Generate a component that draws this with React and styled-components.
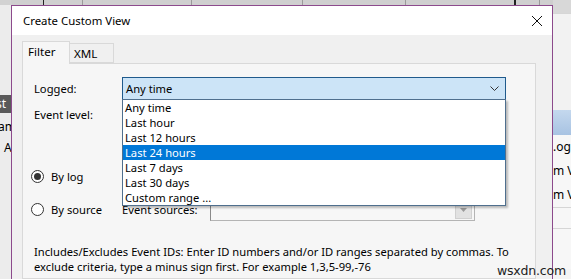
import styled, { createGlobalStyle } from 'styled-components';

const GlobalStyle = createGlobalStyle`
body{
  margin:0;
  overflow:hidden;
  font-family:"Noto Sans","Open Sans",sans-serif;
  font-size:11.2px;
  color:#000;
}
`;

const Desktop = styled.div`
position:relative;
display:flex;
flex-direction:row;
height:279px;
overflow:hidden;
background-color:#e9e9e9;
`;

const LeftStrip = styled.div`
width:11px;
flex-shrink:0;
display:flex;
flex-direction:column;
background-color:#ececec;
border-top:5px solid #d2d2d2;
`;

const DarkBar = styled.div`
margin-top:90px;
height:18px;
background-color:#5a5a5a;
color:#fff;
line-height:18px;
font-size:12px;
text-indent:-4px;
overflow:hidden;
white-space:nowrap;
`;

const StripText = styled.div`
margin-top:${p => p.top}px;
padding-left:${p => p.left || 0}px;
height:16px;
line-height:16px;
font-size:12px;
overflow:hidden;
white-space:nowrap;
text-indent:${p => p.indent || 0}px;
`;

const Middle = styled.div`
width:542px;
flex-shrink:0;
display:flex;
flex-direction:column;
`;

const TopBand = styled.div`
height:5px;
background-color:#cfcfcf;
display:flex;
flex-direction:row;
`;

const Tick = styled.div`
margin-left:${p => p.left}px;
width:${p => p.w || 1}px;
background-color:${p => p.dark ? '#222' : '#9a9a9a'};
`;

const Window = styled.div`
flex:1;
display:flex;
flex-direction:column;
border:1px solid #8c4a8c;
border-bottom:none;
background-color:#f0f0f0;
`;

const TitleBar = styled.div`
height:29px;
display:flex;
flex-direction:row;
align-items:center;
justify-content:space-between;
background-color:#fff;
padding-left:11px;
font-size:11.4px;
`;

const CloseButton = styled.div`
width:30px;
height:29px;
display:flex;
align-items:center;
justify-content:center;
`;

const Body = styled.div`
flex:1;
padding:6px 16px 0 10px;
display:flex;
flex-direction:column;
`;

const TabRow = styled.div`
display:flex;
flex-direction:row;
align-items:flex-end;
height:22px;
`;

const Tab = styled.div`
position:relative;
box-sizing:border-box;
width:${p => p.w}px;
height:${p => p.active ? 23 : 20}px;
padding-left:${p => p.active ? 5 : 4}px;
line-height:19px;
border:1px solid #d9d9d9;
border-bottom:${p => p.active ? 'none' : '1px solid #d9d9d9'};
border-left:${p => p.active ? '1px solid #d9d9d9' : 'none'};
background-color:${p => p.active ? '#f6f6f6' : '#f0f0f0'};
margin-bottom:${p => p.active ? -1 : 0}px;
z-index:${p => p.active ? 1 : 0};
font-size:11.6px;
`;

const Panel = styled.div`
flex:1;
border:1px solid #d9d9d9;
background-color:#f6f6f6;
padding:13px 11px 0 11px;
display:flex;
flex-direction:column;
`;

const Row = styled.div`
display:flex;
flex-direction:row;
align-items:center;
height:${p => p.h || 16}px;
margin-top:${p => p.mt || 0}px;
`;

const Label = styled.div`
width:${p => p.w || 88}px;
flex-shrink:0;
white-space:nowrap;
`;

const Combo = styled.div`
position:relative;
box-sizing:border-box;
width:384px;
height:23px;
border:1px solid #1f5a8c;
background-color:#cce4f7;
display:flex;
flex-direction:row;
align-items:center;
justify-content:space-between;
padding:0 6px 0 3px;
`;

const DropList = styled.div`
position:absolute;
top:100%;
left:-1px;
width:384px;
box-sizing:border-box;
border:1px solid #4f6f8e;
background-color:#fff;
box-shadow:2px 2px 2px rgba(0,0,0,0.25);
z-index:5;
`;

const Option = styled.div`
height:15px;
line-height:15px;
padding-left:2px;
white-space:nowrap;
background-color:${p => p.selected ? '#0078d7' : 'transparent'};
color:${p => p.selected ? '#fff' : '#000'};
`;

const RadioRow = styled.div`
display:flex;
flex-direction:row;
align-items:center;
width:${p => p.w || 88}px;
flex-shrink:0;
margin-left:-3px;
margin-right:3px;
`;

const RadioCircle = styled.div`
box-sizing:border-box;
width:13px;
height:13px;
border-radius:50%;
border:1px solid #333;
background-color:#fff;
display:flex;
align-items:center;
justify-content:center;
margin-right:7px;
&::after{
  content:"";
  display:${p => p.checked ? 'block' : 'none'};
  width:7px;
  height:7px;
  border-radius:50%;
  background-color:#333;
}
`;

const SourceInput = styled.div`
box-sizing:border-box;
width:265px;
height:23px;
border:1px solid #b4b4b4;
border-left-color:#8a8a8a;
background-color:#f7f7f7;
display:flex;
flex-direction:row;
justify-content:flex-end;
align-items:center;
padding-right:2px;
`;

const DropButton = styled.div`
width:15px;
height:17px;
background-color:#e2e2e2;
border:1px solid #d0d0d0;
display:flex;
align-items:center;
justify-content:center;
`;

const Footer = styled.div`
margin-top:23px;
line-height:15px;
width:476px;
`;

const RightStrip = styled.div`
flex:1;
display:flex;
flex-direction:column;
background-color:#f4f4f4;
font-size:12px;
`;

const RightBand = styled.div`
height:${p => p.h}px;
background:${p => p.bg};
border-bottom:${p => p.line ? '1px solid #d6d6d6' : 'none'};
line-height:${p => p.h}px;
overflow:hidden;
white-space:nowrap;
`;

const Watermark = styled.div`
position:absolute;
left:497px;
top:263px;
font-size:12.5px;
color:#222;
font-family:"DejaVu Sans",sans-serif;
letter-spacing:-0.2px;
`;

const options = ['Any time', 'Last hour', 'Last 12 hours', 'Last 24 hours', 'Last 7 days', 'Last 30 days', 'Custom range ...'];

function App() {
  return (
    <Desktop>
      <GlobalStyle />
      <LeftStrip>
        <DarkBar>st</DarkBar>
        <StripText top={6} indent={-2}>am</StripText>
        <StripText top={5} left={4}>A</StripText>
      </LeftStrip>
      <Middle>
        <TopBand>
          <Tick left={32} dark />
          <Tick left={38} />
          <Tick left={108} />
          <Tick left={110} />
          <Tick left={102} />
          <Tick left={108} w={2} dark />
          <Tick left={23} />
        </TopBand>
        <Window>
          <TitleBar>
            Create Custom View
            <CloseButton>
              <svg width="12" height="12" viewBox="0 0 12 12">
                <path d="M1 1 L11 11 M11 1 L1 11" stroke="#111" strokeWidth="1" fill="none" />
              </svg>
            </CloseButton>
          </TitleBar>
          <Body>
            <TabRow>
              <Tab active w={48}>Filter</Tab>
              <Tab w={44}>XML</Tab>
            </TabRow>
            <Panel>
              <Row h={23}>
                <Label>Logged:</Label>
                <Combo>
                  Any time
                  <svg width="9" height="6" viewBox="0 0 9 6">
                    <path d="M0.5 0.5 L4.5 4.5 L8.5 0.5" stroke="#333" strokeWidth="1" fill="none" />
                  </svg>
                  <DropList>
                    {options.map((o, i) => (
                      <Option key={i} selected={o === 'Last 24 hours'}>{o}</Option>
                    ))}
                  </DropList>
                </Combo>
              </Row>
              <Row mt={6}>
                <Label>Event level:</Label>
              </Row>
              <Row mt={46}>
                <RadioRow>
                  <RadioCircle checked />
                  By log
                </RadioRow>
              </Row>
              <Row h={23} mt={14}>
                <RadioRow>
                  <RadioCircle />
                  By source
                </RadioRow>
                <Label w={88}>Event sources:</Label>
                <SourceInput>
                  <DropButton>
                    <svg width="7" height="4" viewBox="0 0 7 4">
                      <path d="M0 0 L7 0 L3.5 4 Z" fill="#9a9a9a" />
                    </svg>
                  </DropButton>
                </SourceInput>
              </Row>
              <Footer>
                Includes/Excludes Event IDs: Enter ID numbers and/or ID ranges separated by commas. To exclude criteria, type a minus sign first. For example 1,3,5-99,-76
              </Footer>
            </Panel>
          </Body>
        </Window>
      </Middle>
      <RightStrip>
        <RightBand h={13} bg="#d8d8d8" line />
        <RightBand h={96} bg="#f2f2f2" />
        <RightBand h={25} bg="linear-gradient(#c4d8ee,#a8c3e2)" />
        <RightBand h={24} bg="#f7f7f7">.og</RightBand>
        <RightBand h={24} bg="#f7f7f7">m V</RightBand>
        <RightBand h={24} bg="#f7f7f7" line>m V</RightBand>
        <RightBand h={20} bg="#f7f7f7" line />
        <RightBand h={40} bg="#f7f7f7" />
      </RightStrip>
      <Watermark>wsxdn.com</Watermark>
    </Desktop>
  );
}

export default App;
